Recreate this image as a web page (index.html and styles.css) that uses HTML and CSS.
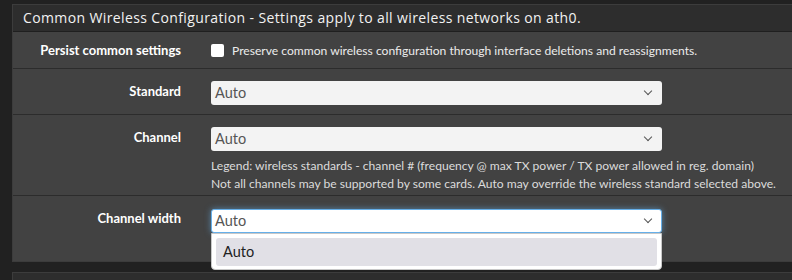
FILE: index.html
```html
<!DOCTYPE html>
<html lang="en">
<head>
  <meta charset="UTF-8">
  <title>Wireless Settings</title>
  <link rel="stylesheet" href="styles.css">
</head>
<body>

  <div class="panel">
    <div class="panel-heading">Common Wireless Configuration - Settings apply to all wireless networks on ath0.</div>
    <div class="panel-body">

      <div class="form-group row-persist">
        <label class="col-label">Persist common settings</label>
        <div class="col-field">
          <label class="checkbox"><span class="box"></span>Preserve common wireless configuration through interface deletions and reassignments.</label>
        </div>
      </div>

      <div class="form-group row-standard">
        <label class="col-label">Standard</label>
        <div class="col-field">
          <div class="select">Auto</div>
        </div>
      </div>

      <div class="form-group row-channel">
        <label class="col-label">Channel</label>
        <div class="col-field">
          <div class="select">Auto</div>
          <div class="help-block">
            Legend: wireless standards - channel # (frequency @ max TX power / TX power allowed in reg. domain)<br>
            Not all channels may be supported by some cards. Auto may override the wireless standard selected above.
          </div>
        </div>
      </div>

      <div class="form-group row-width">
        <label class="col-label">Channel width</label>
        <div class="col-field">
          <div class="select focus">Auto</div>
          <!-- open dropdown list -->
          <div class="dropdown">
            <div class="option">Auto</div>
          </div>
        </div>
      </div>

    </div>
  </div>

  <div class="panel next"></div>

</body>
</html>
```

FILE: styles.css
```css
body {
  margin: 0;
  padding: 4px 0 0 12px;
  background-color: #212121;
  font-family: "Lato", "Open Sans", sans-serif;
  color: #e6e6e6;
  height: 276px;
  overflow: hidden;
}
.panel {
  border: 1px solid #3c3c3c;
  border-right: none;
  background-color: #424242;
}
.panel-heading {
  height: 26px;
  line-height: 26px;
  padding: 0 10px;
  background-color: #2d2d2d;
  border-bottom: 1px solid #1f1f1f;
  font-family: "Open Sans", sans-serif;
  font-size: 14px;
  letter-spacing: 0.38px;
  color: #f2f2f2;
}
.form-group {
  display: flex;
  border-bottom: 1px solid #2c2c2c;
}
.form-group:last-child {
  border-bottom: none;
}
.col-label {
  width: 168px;
  padding-right: 15px;
  text-align: right;
  font-weight: bold;
  font-size: 13px;
  color: #ffffff;
}
.col-field {
  position: relative;
  width: 451px;
  padding-left: 15px;
}
.row-persist {
  height: 36px;
  align-items: center;
}
.row-standard {
  height: 46px;
  padding-top: 12px;
  box-sizing: border-box;
}
.row-channel {
  height: 81px;
  padding-top: 12px;
  box-sizing: border-box;
}
.row-width {
  height: 65px;
  padding-top: 13px;
  box-sizing: border-box;
}
.row-standard .col-label,
.row-channel .col-label {
  padding-top: 2px;
}
.row-width .col-label {
  padding-top: 1px;
}
.checkbox {
  display: flex;
  align-items: center;
  font-size: 12.1px;
  color: #ececec;
  white-space: nowrap;
}
.box {
  flex-shrink: 0;
  width: 13px;
  height: 13px;
  margin-right: 8px;
  background-color: #fff;
  border-radius: 2px;
}
.select {
  position: relative;
  height: 24px;
  line-height: 24px;
  box-sizing: border-box;
  padding-left: 4px;
  background-color: #f3f3f3;
  border-radius: 3px;
  color: #555;
  font-size: 14.5px;
}
.select::after {
  content: "";
  position: absolute;
  right: 11px;
  top: 7px;
  width: 5px;
  height: 5px;
  border-right: 1.5px solid #555;
  border-bottom: 1.5px solid #555;
  transform: rotate(45deg);
}
.select.focus {
  background-color: #fff;
  border: 1px solid #66afe9;
  line-height: 22px;
  padding-left: 3px;
  box-shadow: 0 0 6px rgba(102, 175, 233, 0.6);
}
.select.focus::after {
  top: 6px;
  right: 10px;
}
.help-block {
  margin-top: 6px;
  font-size: 12.1px;
  line-height: 18px;
  color: #dcdcdc;
  white-space: nowrap;
}
.dropdown {
  position: absolute;
  top: 24px;
  left: 15px;
  width: 451px;
  height: 37px;
  box-sizing: border-box;
  padding: 4px;
  background-color: #fff;
  border: 1px solid #c8c8c8;
  border-radius: 0 0 4px 4px;
  z-index: 2;
}
.option {
  height: 28px;
  line-height: 28px;
  padding-left: 7px;
  background-color: #e1e0e6;
  border-radius: 3px;
  font-size: 14.5px;
  color: #222;
}
.panel.next {
  margin-top: 10px;
  height: 20px;
  background-color: #2d2d2d;
}
```
